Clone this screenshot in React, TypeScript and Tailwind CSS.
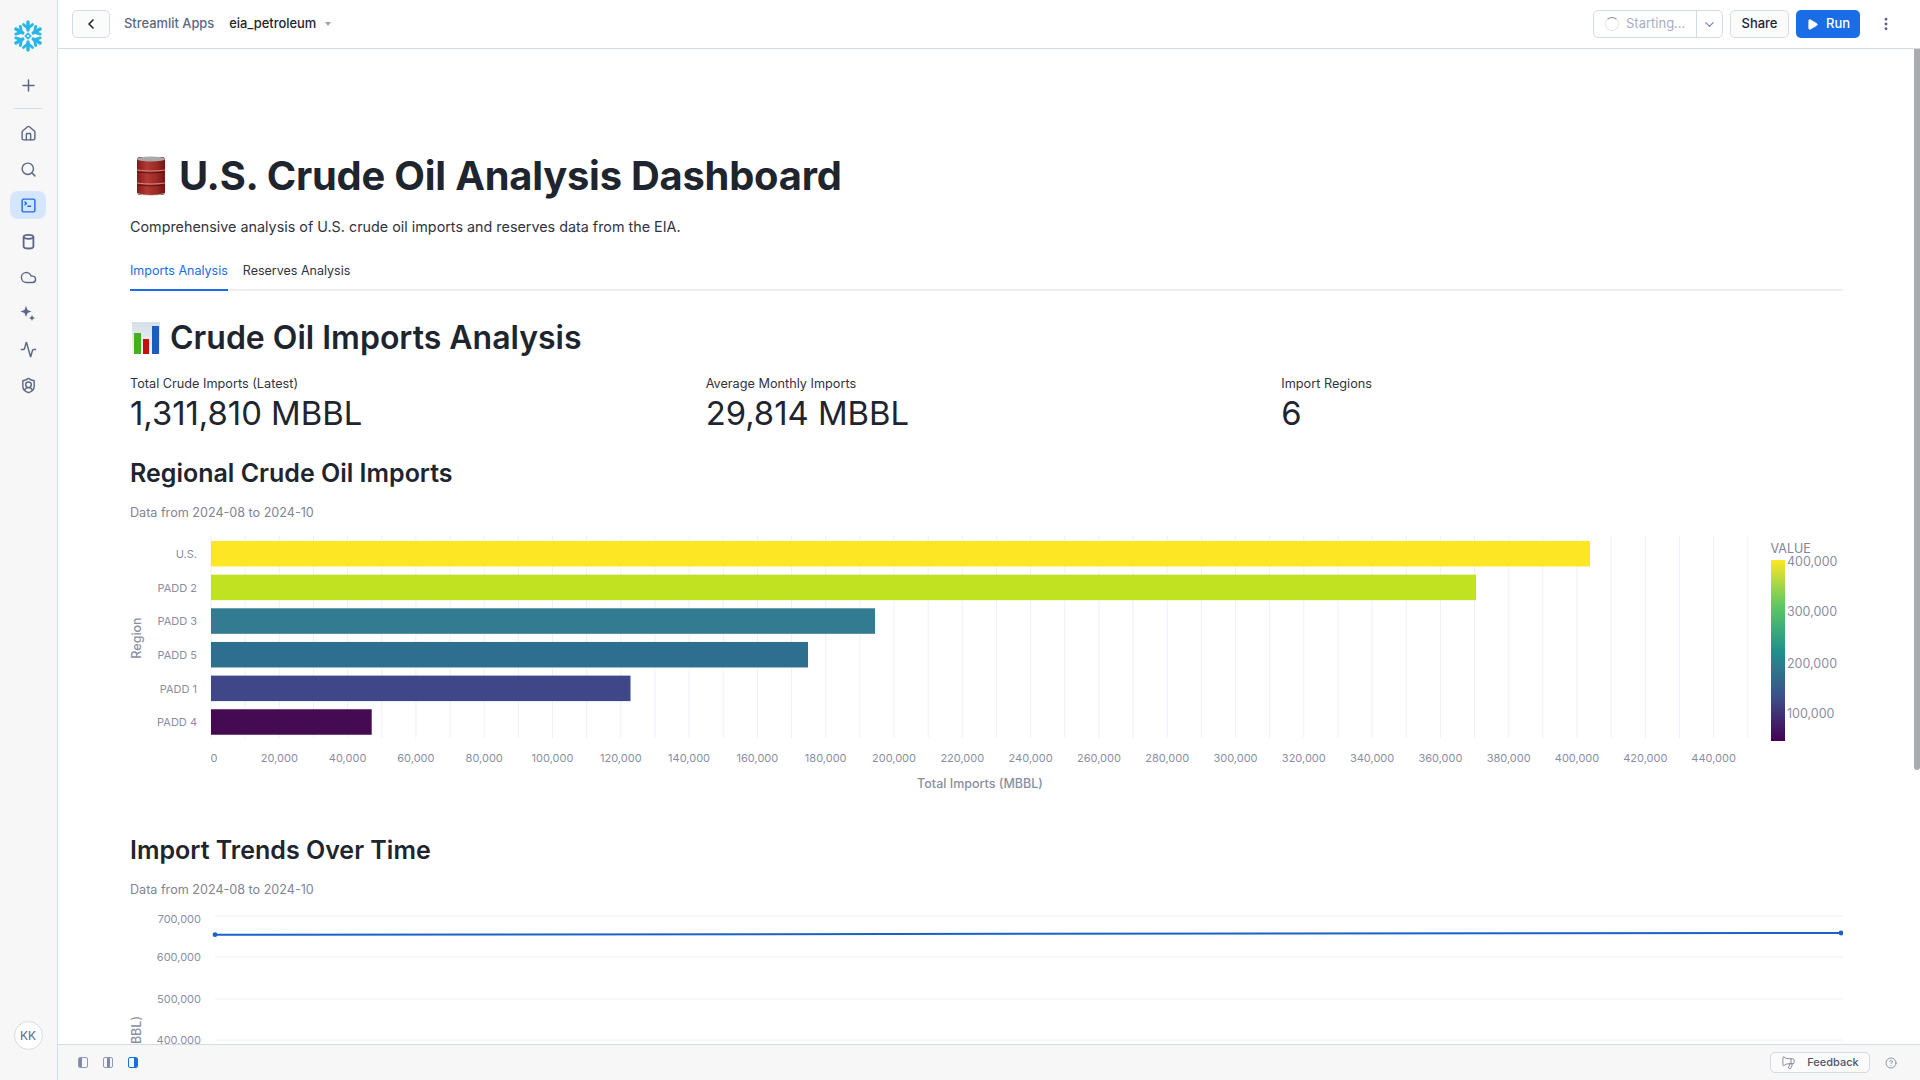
import {
  Activity,
  ChevronDown,
  ChevronLeft,
  CircleHelp,
  Cloud,
  EllipsisVertical,
  House,
  Megaphone,
  Play,
  Plus,
  Search,
  ShieldUser,
  SquareTerminal,
} from "lucide-react";
import type { ReactNode } from "react";

const BARS = [
  { label: "U.S.", end: 1459, color: "#fde725" },
  { label: "PADD 2", end: 1345, color: "#c0e220" },
  { label: "PADD 3", end: 744, color: "#337b91" },
  { label: "PADD 5", end: 677, color: "#2e6e8e" },
  { label: "PADD 1", end: 499.5, color: "#404788" },
  { label: "PADD 4", end: 240.7, color: "#440a52" },
];

const X_TICKS = Array.from({ length: 23 }, (_, i) => i * 20000);
const LINE_TICKS = [
  { y: 13, textY: 20, label: "700,000" },
  { y: 54, textY: 58, label: "600,000" },
  { y: 96, textY: 100, label: "500,000" },
  { y: 137, textY: 141, label: "400,000" },
];

function SnowflakeLogo() {
  return (
    <svg width="32" height="32" viewBox="-16 -16 32 32" fill="none">
      {[0, 60, 120, 180, 240, 300].map((deg) => (
        <g key={deg} transform={`rotate(${deg})`} stroke="#29b5e8" strokeLinecap="round">
          <path d="M0 -6V-14" strokeWidth="3.4" />
          <path d="M-4.5 -11.5L0 -7.5L4.5 -11.5" strokeWidth="2.8" />
        </g>
      ))}
      <path d="M0 -2.6L2.6 0L0 2.6L-2.6 0Z" stroke="#29b5e8" strokeWidth="1.6" />
    </svg>
  );
}

function SparkIcon() {
  return (
    <svg width="16" height="16" viewBox="0 0 16 16" fill="#5b6784">
      <path d="M6 1L7.5 5L11.5 6.5L7.5 8L6 12L4.5 8L0.5 6.5L4.5 5Z" />
      <path d="M12 10L12.9 12.1L15 13L12.9 13.9L12 16L11.1 13.9L9 13L11.1 12.1Z" />
    </svg>
  );
}

function DatabaseIcon() {
  return (
    <svg width="17" height="17" viewBox="0 0 16 16" fill="none" stroke="currentColor" strokeWidth="1.7">
      <ellipse cx="8" cy="3.6" rx="4.6" ry="1.9" />
      <path d="M3.4 3.6V12.4C3.4 13.8 5.4 14.6 8 14.6C10.6 14.6 12.6 13.8 12.6 12.4V3.6" />
    </svg>
  );
}

function BarrelEmoji() {
  return (
    <svg width="30" height="40" viewBox="0 0 30 40" className="shrink-0">
      <defs>
        <linearGradient id="barrel" x1="0" x2="1" y1="0" y2="0">
          <stop offset="0" stopColor="#7e1d1a" />
          <stop offset="0.35" stopColor="#b23a33" />
          <stop offset="0.7" stopColor="#9c2a25" />
          <stop offset="1" stopColor="#6f1815" />
        </linearGradient>
      </defs>
      <rect x="1" y="1" width="28" height="38" rx="3" fill="url(#barrel)" />
      <ellipse cx="15" cy="3" rx="14" ry="2.6" fill="#a9aaa8" />
      <path d="M1 37Q15 41 29 37V38Q15 41 1 38Z" fill="#b9b9b5" />
      <path d="M1 14Q15 16 29 14M1 27Q15 29 29 27" stroke="#d08a82" strokeWidth="1.2" fill="none" />
      <path d="M1 16Q15 18 29 16M1 29Q15 31 29 29" stroke="#5e1210" strokeWidth="1" fill="none" />
    </svg>
  );
}

function ChartEmoji() {
  return (
    <svg width="28" height="32" viewBox="0 0 28 32" className="shrink-0">
      <defs>
        <linearGradient id="paper" x1="0" x2="0" y1="0" y2="1">
          <stop offset="0" stopColor="#d5dfe6" />
          <stop offset="1" stopColor="#f2f5f7" />
        </linearGradient>
      </defs>
      <rect width="28" height="32" fill="url(#paper)" />
      <rect x="2" y="11" width="7" height="21" fill="#45b01f" />
      <rect x="11" y="17" width="6" height="15" fill="#c5100e" />
      <rect x="20" y="4" width="7" height="28" fill="#1a5cc0" />
    </svg>
  );
}

function RailIcon({ children, active }: { children: ReactNode; active?: boolean }) {
  return (
    <div className={`flex h-7 w-9 items-center justify-center rounded-lg ${active ? "bg-[#d5e5fb] text-[#1a6ce7]" : "text-[#5b6784]"}`}>
      {children}
    </div>
  );
}

function Sidebar() {
  return (
    <aside className="flex w-[58px] shrink-0 flex-col items-center border-r border-[#d5dae8] bg-[#f7f7f7] pt-[20px] pr-px pb-[30px]">
      <SnowflakeLogo />
      <Plus size={19} strokeWidth={1.9} className="mt-[24px] text-[#5b6784]" />
      <div className="mt-[13px] mb-[10px] h-px w-7 bg-[#d5dae8]" />
      <div className="flex flex-col gap-2">
        <RailIcon><House size={17} strokeWidth={2} /></RailIcon>
        <RailIcon><Search size={17} strokeWidth={2} /></RailIcon>
        <RailIcon active><SquareTerminal size={17} strokeWidth={2} /></RailIcon>
        <RailIcon><DatabaseIcon /></RailIcon>
        <RailIcon><Cloud size={17} strokeWidth={2} /></RailIcon>
        <RailIcon><SparkIcon /></RailIcon>
        <RailIcon><Activity size={17} strokeWidth={2} /></RailIcon>
        <RailIcon><ShieldUser size={17} strokeWidth={2} /></RailIcon>
      </div>
      <div className="mt-auto flex h-[29px] w-[29px] items-center justify-center rounded-full border border-[#d5dae8] bg-white text-[12px] text-[#5b6784]">
        KK
      </div>
    </aside>
  );
}

function TopBar() {
  return (
    <header className="flex h-[49px] shrink-0 items-center border-b border-[#d5dae8] bg-white pr-[26px] pl-[14px]">
      <button className="flex h-[28px] w-[38px] items-center justify-center rounded-[5px] border border-[#d5dae8] bg-[#fbfbfc] text-[#1e252f]">
        <ChevronLeft size={16} strokeWidth={2.4} />
      </button>
      <span className="ml-[14px] text-[12.9px] font-medium text-[#5b6784]">Streamlit Apps</span>
      <span className="ml-[15px] text-[12.9px] font-medium text-[#1e252f]">eia_petroleum</span>
      <span className="ml-[9px] h-0 w-0 border-x-[3.5px] border-t-[4px] border-x-transparent border-t-[#9aa2b5]" />
      <div className="ml-auto flex items-center">
        <div className="flex h-[28px] w-[130px] items-center rounded-[5px] border border-[#d5dae8] bg-white text-[13px] text-[#a6aec2]">
          <div className="flex flex-1 items-center gap-[7px] pl-[11px]">
            <span className="h-[14px] w-[14px] rounded-full border-[1.5px] border-[#e3e6ee] border-t-[#8a93a8]" />
            Starting...
          </div>
          <div className="flex h-full w-[26px] items-center justify-center border-l border-[#d5dae8]">
            <ChevronDown size={15} strokeWidth={2} className="text-[#7f89a3]" />
          </div>
        </div>
        <button className="ml-[7px] flex h-[28px] w-[59px] items-center justify-center rounded-[5px] border border-[#d5dae8] bg-[#fbfbfc] text-[13px] font-medium text-[#1e252f]">
          Share
        </button>
        <button className="ml-[7px] flex h-[28px] w-[64px] items-center justify-center gap-[7px] rounded-[5px] bg-[#1a6ce7] text-[13px] font-medium text-white">
          <Play size={13} fill="white" strokeWidth={1} />
          Run
        </button>
        <EllipsisVertical size={16} strokeWidth={2.4} className="ml-[18px] text-[#5b6784]" />
      </div>
    </header>
  );
}

function PanelToggles() {
  return (
    <div className="flex items-center gap-[15px]">
      <span className="flex h-[11px] w-[10px] overflow-hidden rounded-[2px] border border-[#8f9ab3]">
        <span className="w-[3px] bg-[#7f8aa5]" />
      </span>
      <span className="flex h-[11px] w-[10px] justify-center overflow-hidden rounded-[2px] border border-[#8f9ab3]">
        <span className="w-[3px] bg-[#7f8aa5]" />
      </span>
      <span className="flex h-[11px] w-[10px] justify-end overflow-hidden rounded-[2px] border border-[#1a6ce7]">
        <span className="w-[3px] bg-[#1a6ce7]" />
      </span>
    </div>
  );
}

function BottomBar() {
  return (
    <footer className="flex h-[36px] shrink-0 items-center border-t border-[#d5dae8] bg-[#f7f7f7] pr-[23px] pl-[20px]">
      <PanelToggles />
      <div className="ml-auto flex items-center">
        <button className="flex h-[21px] w-[100px] items-center justify-center gap-[11px] rounded-[5px] border border-[#d5dae8] bg-[#fbfbfc] text-[11px] font-medium text-[#4f5563]">
          <Megaphone size={15} strokeWidth={1.3} className="-scale-x-100 text-[#6d7689]" />
          Feedback
        </button>
        <CircleHelp size={12} strokeWidth={1.5} className="ml-[15px] text-[#6d7689]" />
      </div>
    </footer>
  );
}

function Metric({ label, value }: { label: string; value: string }) {
  return (
    <div>
      <div className="text-[12.7px] leading-[20px] text-[#31333f]">{label}</div>
      <div className="text-[32.8px] leading-[39px] text-[#1e252f]">{value}</div>
    </div>
  );
}

function BarChart() {
  const origin = 81;
  const perTick = 68.3;
  const gridX = Array.from({ length: 46 }, (_, i) => origin + (i * perTick) / 2);
  return (
    <svg width="1713" height="262" className="mt-[7px] block font-[Inter]">
      <defs>
        <linearGradient id="viridis" x1="0" x2="0" y1="0" y2="1">
          <stop offset="0" stopColor="#fde725" />
          <stop offset="0.25" stopColor="#5ec962" />
          <stop offset="0.5" stopColor="#21918c" />
          <stop offset="0.75" stopColor="#3b528b" />
          <stop offset="1" stopColor="#440154" />
        </linearGradient>
      </defs>
      {gridX.map((x) => (
        <line key={x} x1={x} x2={x} y1={6} y2={208} stroke="#eef0f7" strokeWidth="1" />
      ))}
      {BARS.map((bar, i) => {
        const y = 11 + i * 33.65;
        return (
          <g key={bar.label}>
            <rect x={origin} y={y} width={bar.end - origin + 1} height={25.5} fill={bar.color} />
            <text x={67} y={y + 17} textAnchor="end" fontSize="11" fill="#8a8ea3">{bar.label}</text>
          </g>
        );
      })}
      <text transform="translate(11 108) rotate(-90)" textAnchor="middle" fontSize="12.5" fontWeight="500" fill="#8a8ea3">Region</text>
      {X_TICKS.map((v, i) => (
        <text key={v} x={origin + i * perTick + (i === 0 ? 3 : 0)} y={232} textAnchor="middle" fontSize="11" fill="#8a8ea3">
          {v.toLocaleString("en-US")}
        </text>
      ))}
      <text x={850} y={258} textAnchor="middle" fontSize="12.5" fontWeight="500" fill="#8a8ea3">Total Imports (MBBL)</text>
      <text x={1640.5} y={23} fontSize="12.5" fill="#7f8399">VALUE</text>
      <rect x={1641} y={30} width={14} height={181} fill="url(#viridis)" />
      {[
        { y: 36, label: "400,000" },
        { y: 86, label: "300,000" },
        { y: 138, label: "200,000" },
        { y: 188, label: "100,000" },
      ].map((t) => (
        <text key={t.label} x={1657} y={t.y} fontSize="12.5" fill="#8a8ea3">{t.label}</text>
      ))}
    </svg>
  );
}

function LineChart() {
  return (
    <svg width="1713" height="160" className="mt-[3px] block font-[Inter]">
      {LINE_TICKS.map((t) => (
        <g key={t.label}>
          <line x1={85} x2={1713} y1={t.y} y2={t.y} stroke="#eef0f7" />
          <text x={71} y={t.textY} textAnchor="end" fontSize="11" fill="#8a8ea3">{t.label}</text>
        </g>
      ))}
      <path d="M85 31.7L1713 30" stroke="#1a62c9" strokeWidth="2" />
      <circle cx={85} cy={31.7} r={2.4} fill="#1a62c9" />
      <circle cx={1711} cy={30} r={2.4} fill="#1a62c9" />
      <text transform="translate(11 113) rotate(-90)" textAnchor="end" fontSize="12.5" fontWeight="500" fill="#8a8ea3">Total Imports (MBBL)</text>
    </svg>
  );
}

export default function App() {
  return (
    <div className="flex h-screen w-screen overflow-hidden bg-white font-[Inter,sans-serif] text-[#1e252f]">
      <Sidebar />
      <div className="flex min-w-0 flex-1 flex-col">
        <TopBar />
        <main className="relative min-h-0 flex-1 overflow-hidden">
          <div className="absolute top-0 right-0 h-[721px] w-[6px] rounded-b-sm bg-[#a9abaf]" />
          <div className="ml-[72px] w-[1713px] pt-[102px]">
            <h1 className="flex h-[50px] items-center gap-[13px] text-[39.85px] font-bold tracking-[-0.2px] text-[#1e252f]">
              <span className="ml-[6px]"><BarrelEmoji /></span>
              U.S. Crude Oil Analysis Dashboard
            </h1>
            <p className="mt-[16px] text-[14.35px] leading-[20px] text-[#31333f]">
              Comprehensive analysis of U.S. crude oil imports and reserves data from the EIA.
            </p>
            <div className="mt-[24px] flex gap-[15px] border-b-2 border-[#eeeeee] text-[12.5px] leading-[20px]">
              <span className="-mb-[2px] border-b-2 border-[#1a6ce7] pb-[8px] text-[#1a6ce7]">Imports Analysis</span>
              <span className="text-[#31333f]">Reserves Analysis</span>
            </div>
            <h2 className="mt-[27px] flex h-[40px] items-center gap-[10px] text-[32px] font-semibold text-[#1e252f]">
              <span className="ml-[2px]"><ChartEmoji /></span>
              Crude Oil Imports Analysis
            </h2>
            <div className="mt-[16px] grid grid-cols-3 gap-4 pr-[2px]">
              <Metric label="Total Crude Imports (Latest)" value="1,311,810 MBBL" />
              <Metric label="Average Monthly Imports" value="29,814 MBBL" />
              <Metric label="Import Regions" value="6" />
            </div>
            <h3 className="mt-[24px] text-[25px] leading-[32px] font-semibold text-[#1e252f]">Regional Crude Oil Imports</h3>
            <div className="mt-[14px] text-[12.6px] leading-[20px] text-[#808495]">Data from 2024-08 to 2024-10</div>
            <BarChart />
            <h3 className="mt-[42px] text-[25px] leading-[32px] font-semibold text-[#1e252f]">Import Trends Over Time</h3>
            <div className="mt-[14px] text-[12.6px] leading-[20px] text-[#808495]">Data from 2024-08 to 2024-10</div>
            <LineChart />
          </div>
        </main>
        <BottomBar />
      </div>
    </div>
  );
}
